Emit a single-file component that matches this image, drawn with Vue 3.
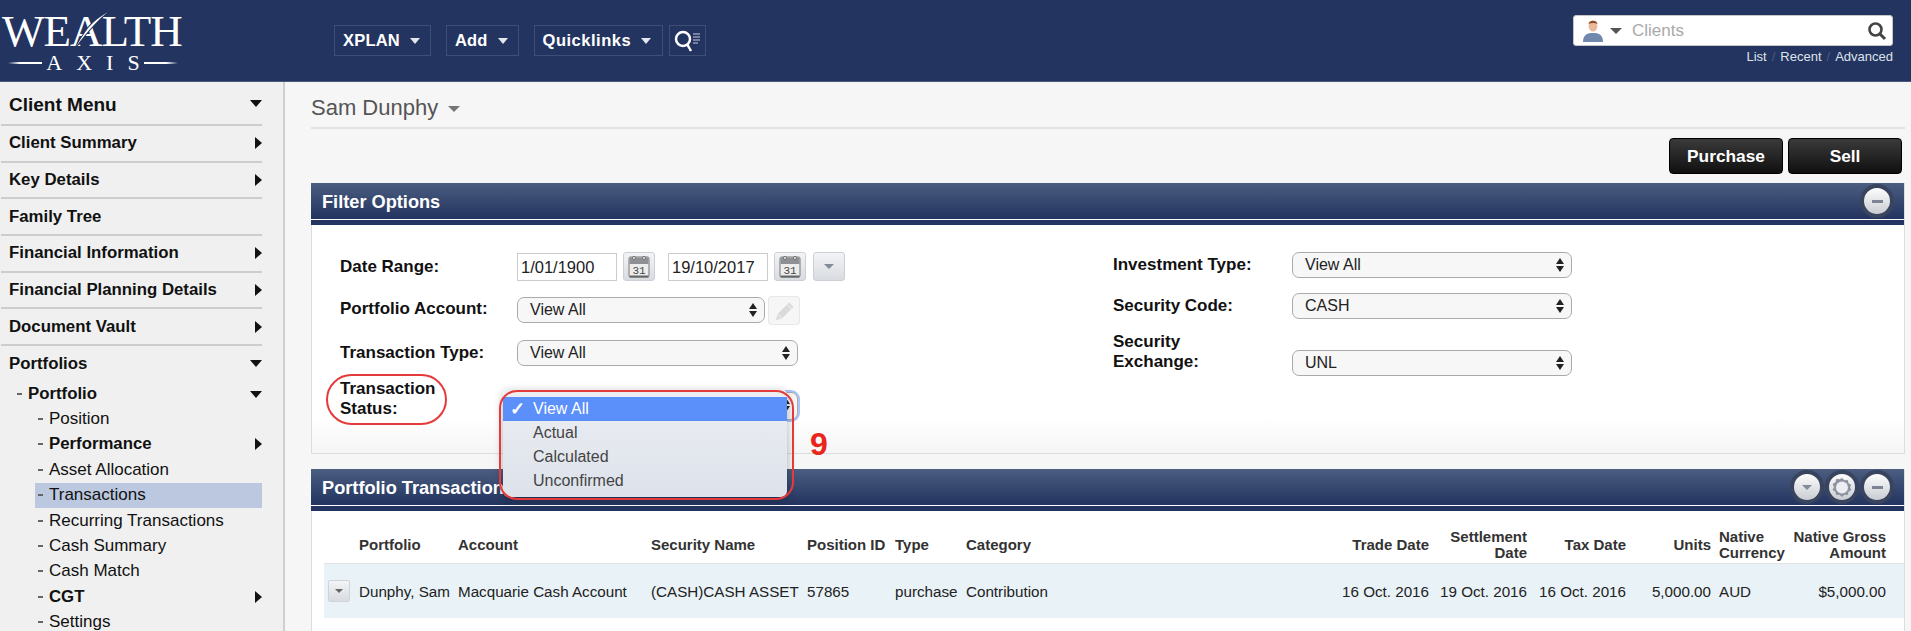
<script setup>
const navButtons = ['XPLAN', 'Add', 'Quicklinks']
const menu = [
  { label: 'Client Summary', icon: 'right' },
  { label: 'Key Details', icon: 'right' },
  { label: 'Family Tree' },
  { label: 'Financial Information', icon: 'right' },
  { label: 'Financial Planning Details', icon: 'right' },
  { label: 'Document Vault', icon: 'right' },
]
const sub = [
  { label: 'Position' },
  { label: 'Performance', bold: true, icon: true },
  { label: 'Asset Allocation' },
  { label: 'Transactions', active: true },
  { label: 'Recurring Transactions' },
  { label: 'Cash Summary' },
  { label: 'Cash Match' },
  { label: 'CGT', bold: true, icon: true },
  { label: 'Settings' },
]
const heads = [
  { t: '' }, { t: 'Portfolio' }, { t: 'Account' }, { t: 'Security Name' }, { t: 'Position ID' }, { t: 'Type' }, { t: 'Category' },
  { t: 'Trade Date', r: 1 }, { t: 'Settlement Date', r: 1 }, { t: 'Tax Date', r: 1 }, { t: 'Units', r: 1 },
  { t: 'Native Currency', p: 1 }, { t: 'Native Gross Amount', r: 1 },
]
const cells = [
  { t: 'Dunphy, Sam' }, { t: 'Macquarie Cash Account' }, { t: '(CASH)CASH ASSET' }, { t: '57865' }, { t: 'purchase' }, { t: 'Contribution' },
  { t: '16 Oct. 2016', r: 1 }, { t: '19 Oct. 2016', r: 1 }, { t: '16 Oct. 2016', r: 1 }, { t: '5,000.00', r: 1 },
  { t: 'AUD', p: 1 }, { t: '$5,000.00', r: 1 },
]
const options = ['Actual', 'Calculated', 'Unconfirmed']
</script>

<template>
  <div class="page">
    <header class="top">
      <div class="logo">
        <div class="logo-word">WEALTH</div>
        <svg class="logo-spike" width="34" height="38" viewBox="0 0 34 38"><path d="M33 1C25 7 13 19 1 36C7 25 11 20 14 16C19 10 26 5 33 1Z" fill="#fff" stroke="#22345f" stroke-width="2" paint-order="stroke"/></svg>
        <div class="logo-sub"><i></i><span>AXIS</span><i class="rev"></i></div>
      </div>
      <nav class="nav">
        <div v-for="b in navButtons" :key="b" class="nav-btn">{{ b }}<b class="nav-caret"></b></div>
        <div class="nav-search">
          <svg width="30" height="24" viewBox="0 0 30 24"><circle cx="10" cy="10" r="7" fill="none" stroke="#fff" stroke-width="2.500"/><path d="M14 15l4 7" stroke="#fff" stroke-width="2.500"/><path d="M20 5h7M20 8h7M20 11h7M20 14h5" stroke="#c8cedb" stroke-width="1.200"/></svg>
        </div>
      </nav>
      <div class="client-search">
        <div class="search-box">
          <svg class="person" width="20" height="23" viewBox="0 0 20 23"><ellipse cx="10" cy="7" rx="4.400" ry="5.600" fill="#eab99a"/><path d="M5.500 5C6 .8 14 .8 14.500 5C12 3.500 8 3.500 5.500 5Z" fill="#8a4a2c"/><path d="M0 23C0 15 5 14 10 14S20 15 20 23Z" fill="#7088ad"/></svg>
          <b class="search-caret"></b>
          <span class="search-text">Clients</span>
          <svg class="glass" width="20" height="20" viewBox="0 0 20 20"><circle cx="8.500" cy="8.500" r="6" fill="none" stroke="#444" stroke-width="2.600"/><path d="M13 13l5 5" stroke="#444" stroke-width="3"/></svg>
        </div>
        <div class="search-links"><span>List</span><em>/</em><span>Recent</span><em>/</em><span>Advanced</span></div>
      </div>
    </header>

    <div class="body">
      <aside class="side">
        <div class="menu-row menu-head">Client Menu<b class="down"></b></div>
        <div v-for="m in menu" :key="m.label" class="menu-row">{{ m.label }}<b v-if="m.icon" class="right"></b></div>
        <div class="menu-row last">Portfolios<b class="down"></b></div>
        <div class="sub-row sub-title"><i class="dash"></i>Portfolio<b class="down"></b></div>
        <div v-for="s in sub" :key="s.label" class="sub-row" :class="{ bold: s.bold, active: s.active }">
          <i class="dash"></i>{{ s.label }}<b v-if="s.icon" class="right"></b>
        </div>
      </aside>

      <main class="main">
        <div class="title"><span>Sam Dunphy</span><b class="title-caret"></b></div>
        <div class="actions">
          <button class="black">Purchase</button>
          <button class="black">Sell</button>
        </div>

        <section class="panel">
          <div class="panel-head">
            <h2>Filter Options</h2>
            <div class="round"><i class="minus"></i></div>
          </div>
          <div class="panel-body filters">
            <div class="fcol fleft">
              <div class="frow h29">
                <label>Date Range:</label>
                <div class="date">1/01/1900</div>
                <div class="iconbtn cal"><svg width="24" height="25" viewBox="0 0 24 25"><rect x="2" y="3" width="20" height="20" rx="1.500" fill="#ececec" stroke="#777"/><rect x="2.500" y="3.500" width="19" height="6.500" fill="#8d9195"/><path d="M2.500 22.500h19" stroke="#666" stroke-width="2"/><circle cx="7" cy="4" r="1.600" fill="#ddd" stroke="#666" stroke-width=".8"/><circle cx="17" cy="4" r="1.600" fill="#ddd" stroke="#666" stroke-width=".8"/><text x="12" y="20" text-anchor="middle" class="cal-num">31</text></svg></div>
                <div class="date d2">19/10/2017</div>
                <div class="iconbtn cal"><svg width="24" height="25" viewBox="0 0 24 25"><rect x="2" y="3" width="20" height="20" rx="1.500" fill="#ececec" stroke="#777"/><rect x="2.500" y="3.500" width="19" height="6.500" fill="#8d9195"/><path d="M2.500 22.500h19" stroke="#666" stroke-width="2"/><circle cx="7" cy="4" r="1.600" fill="#ddd" stroke="#666" stroke-width=".8"/><circle cx="17" cy="4" r="1.600" fill="#ddd" stroke="#666" stroke-width=".8"/><text x="12" y="20" text-anchor="middle" class="cal-num">31</text></svg></div>
                <div class="iconbtn drop"><b class="mini-caret"></b></div>
              </div>
              <div class="frow h29 top-align">
                <label>Portfolio Account:</label>
                <div class="sel w248"><span>View All</span><i class="spin"></i></div>
                <div class="iconbtn pencil"><svg width="24" height="24" viewBox="0 0 24 24"><path d="M4 21l1.500-6L17 3.500l4.500 4.500L10 19.500Z" fill="#dadada"/><path d="M5.500 15l4.500 4.500M15 5.500l4.500 4.500" stroke="#f6f6f6" stroke-width="1"/></svg></div>
              </div>
              <div class="frow h26">
                <label>Transaction Type:</label>
                <div class="sel w281"><span>View All</span><i class="spin"></i></div>
              </div>
              <div class="frow status">
                <label class="two">Transaction Status:<span class="ring-label"></span></label>
                <div class="sel w281 focus">
                  <span>View All</span><i class="spin"></i>
                  <div class="dropdown">
                    <div class="opt on"><span class="check">✓</span>View All</div>
                    <div v-for="o in options" :key="o" class="opt">{{ o }}</div>
                  </div>
                  <div class="ring-drop"></div>
                  <div class="nine">9</div>
                </div>
              </div>
            </div>
            <div class="fcol fright">
              <div class="frow h26">
                <label>Investment Type:</label>
                <div class="sel w280"><span>View All</span><i class="spin"></i></div>
              </div>
              <div class="frow h26">
                <label>Security Code:</label>
                <div class="sel w280"><span>CASH</span><i class="spin"></i></div>
              </div>
              <div class="frow exch">
                <label class="two">Security Exchange:</label>
                <div class="sel w280"><span>UNL</span><i class="spin"></i></div>
              </div>
            </div>
          </div>
        </section>

        <section class="panel second">
          <div class="panel-head">
            <h2>Portfolio Transactions</h2>
            <div class="round"><b class="mini-caret"></b></div>
            <div class="round"><svg width="22" height="22" viewBox="0 0 22 22"><path d="M11 2l2.500 2.300 3.300-.4.7 3.300 2.900 1.700L19 11l1.400 3.100-2.900 1.700-.7 3.300-3.300-.4L11 21l-2.500-2.300-3.300.4-.7-3.300-2.900-1.700L3 11 1.600 7.900l2.900-1.700.7-3.300 3.300.4Z" fill="#8d93a0"/><circle cx="11" cy="11.500" r="6" fill="#eceef1"/></svg></div>
            <div class="round"><i class="minus"></i></div>
          </div>
          <div class="panel-body table">
            <div class="grid thead">
              <div v-for="(h, i) in heads" :key="i" :class="{ r: h.r, p: h.p }">{{ h.t }}</div>
            </div>
            <div class="grid trow">
              <div><div class="expand"><b class="mini-caret"></b></div></div>
              <div v-for="(c, i) in cells" :key="i" :class="{ r: c.r, p: c.p }">{{ c.t }}</div>
            </div>
          </div>
        </section>
      </main>
    </div>
  </div>
</template>

<style>
html, body { margin: 0; background: #f6f6f6; overflow: hidden; }
</style>

<style scoped>
.page { width: 1911px; height: 631px; overflow: hidden; font-family: "Liberation Sans", Arial, sans-serif; color: #111; display: flex; flex-direction: column; }
.top { height: 81px; flex: none; background: #22345f; border-bottom: 1px solid #4a5a7c; display: flex; position: relative; }
.logo { width: 334px; flex: none; position: relative; color: #fff; font-family: "Liberation Serif", serif; }
.logo-word { font-size: 45px; line-height: 41px; margin: 11px 0 0 2px; letter-spacing: -1px; }
.logo-spike { position: absolute; left: 75px; top: 11px; }
.logo-sub { display: flex; align-items: center; margin: 0 0 0 8px; width: 170px; justify-content: space-between; font-size: 22px; line-height: 22px; }
.logo-sub span { letter-spacing: 14px; margin-right: -14px; }
.logo-sub i { width: 34px; height: 2px; background: linear-gradient(90deg, transparent, #fff 35%); display: block; }
.logo-sub i.rev { background: linear-gradient(270deg, transparent, #fff 35%); }
.nav { display: flex; align-items: flex-start; margin-top: 25px; }
.nav-btn { height: 29px; border: 1px solid #3e4f77; padding: 0 10px 0 8px; display: flex; align-items: center; color: #fff; font-weight: 700; font-size: 16.500px; letter-spacing: .2px; margin-right: 15px; }
.nav-btn:nth-child(3) { margin-right: 6px; letter-spacing: .5px; padding-right: 11px; }
.nav-caret { border: 5px solid transparent; border-top: 6px solid #e4e7ee; border-bottom: 0; margin-left: 10px; }
.nav-search { width: 35px; height: 29px; border: 1px solid #3e4f77; display: flex; align-items: center; justify-content: center; }
.client-search { margin-left: auto; margin-right: 18px; margin-top: 15px; width: 320px; }
.search-box { height: 29px; background: #fff; border: 1px solid #c6c6c6; border-radius: 3px; display: flex; align-items: center; padding: 0 5px 0 9px; }
.search-caret { border: 6px solid transparent; border-top: 6px solid #555; border-bottom: 0; margin-left: 7px; }
.search-text { color: #a9a9a9; font-size: 17px; margin-left: 10px; }
.glass { margin-left: auto; }
.search-links { display: flex; justify-content: flex-end; color: #dfe3ea; font-size: 13px; line-height: 16px; margin-top: 3px; }
.search-links em { color: #4d5d80; font-style: normal; margin: 0 5px; }

.body { flex: 1; display: flex; min-height: 0; }
.side { flex: none; background: #f0f0f0; border-right: 2px solid #cfcfcf; padding-left: 1px; width: 282px; }
.menu-row { width: 261px; box-sizing: border-box; height: 36.670px; border-bottom: 2px solid #cdcdcd; display: flex; align-items: center; padding-left: 8px; font-weight: 700; font-size: 16.800px; position: relative; }
.menu-head { height: 44px; font-size: 19px; padding-top: 4px; }
.menu-row.last { border: 0; height: 35px; padding-top: 2px; }
.down { position: absolute; right: 0; top: 50%; margin-top: -3px; border: 6.500px solid transparent; border-top: 7px solid #111; border-bottom: 0; }
.right { position: absolute; right: 0; top: 50%; margin-top: -6px; border: 6px solid transparent; border-left: 7px solid #111; border-right: 0; }
.sub-row { width: 227px; margin-left: 34px; height: 25.400px; display: flex; align-items: center; font-size: 17px; position: relative; padding-left: 3px; box-sizing: border-box; }
.sub-row.bold { font-weight: 700; font-size: 16.800px; }
.sub-row.active { background: #bcc8e0; }
.sub-title { width: 246px; margin-left: 15px; font-weight: 700; padding-left: 1px; font-size: 16.800px; }
.dash { width: 5px; height: 2px; background: #666; margin-right: 6px; flex: none; }

.main { flex: 1; min-width: 0; background: #f6f6f6; padding: 0 6px 0 26px; }
.title { height: 47px; border-bottom: 2px solid #e2e2e2; display: flex; align-items: center; color: #555; font-size: 22px; padding-top: 7px; box-sizing: border-box; }
.title-caret { border: 6px solid transparent; border-top: 6px solid #777; border-bottom: 0; margin-left: 10px; margin-top: 2px; }
.actions { display: flex; justify-content: flex-end; gap: 5px; padding: 9px 3px 9px 0; }
.black { width: 114px; height: 36px; border: 1px solid #000; border-radius: 4px; background: linear-gradient(#3a3a3a, #101010); color: #fff; font: 700 17.300px "Liberation Sans", Arial, sans-serif; padding: 0; }

.panel { border-right: 1px solid #ddd; }
.panel-head { height: 36px; background: linear-gradient(#4b5d80, #22345f); border-bottom: 1px solid #fff; box-shadow: 0 5px 0 #22345f; margin-bottom: 5px; display: flex; align-items: center; gap: 1px; padding: 0 10px 0 11px; }
.panel-head h2 { margin: 2px auto 0 0; color: #fff; font-size: 18.200px; font-weight: 700; }
.round { width: 34px; height: 34px; box-sizing: border-box; border-radius: 50%; border: 4px solid #39445f; background: linear-gradient(#fdfdfd, #c9ccd2); display: flex; align-items: center; justify-content: center; }
.minus { width: 11px; height: 3px; background: #7c8392; display: block; }
.mini-caret { border: 5px solid transparent; border-top: 5px solid #848b98; border-bottom: 0; display: block; }
.panel-body { background: #fff; border-left: 1px solid #ddd; }
.filters { height: 229px; padding: 27px 0 0 28px; box-sizing: border-box; display: flex; border-bottom: 1px solid #ddd; background: linear-gradient(#fff 85%, #f5f5f5); }
.fcol { display: flex; flex-direction: column; }
.fleft { width: 773px; }
.frow { display: flex; align-items: center; }
.frow label { font-weight: 700; font-size: 17px; line-height: 20px; width: 177px; flex: none; }
.fright .frow label { width: 179px; }
.top-align { align-items: flex-start; }
.top-align label { line-height: 26px; }
.top-align .sel { margin-top: 1px; }
.h29 { height: 29px; margin-bottom: 15px; }
.h26 { height: 26px; }
.fleft .h26 { margin-bottom: 11px; }
.fright .h26 { margin-bottom: 15px; }
.date { width: 100px; height: 28px; box-sizing: border-box; border: 1px solid #ccc; background: #fff; font-size: 16.500px; color: #222; line-height: 26px; padding-left: 3px; }
.d2 { margin-left: 13px; }
.iconbtn { width: 32px; height: 29px; box-sizing: border-box; border: 1px solid #ccd0d6; border-radius: 3px; background: linear-gradient(#f3f4f6, #d8dbe0); display: flex; align-items: center; justify-content: center; margin-left: 6px; }
.drop { margin-left: 7px; }
.pencil { background: #f6f6f6; border-color: #e8e8e8; margin-left: 3px; }
.cal-num { font: 11px "Liberation Mono", monospace; fill: #444; }
.sel { position: relative; height: 26px; box-sizing: border-box; border: 1px solid #aaa; border-radius: 7px; background: #f7f7f7; font-size: 16px; color: #222; line-height: 24px; padding-left: 12px; }
.w248 { width: 248px; }
.w281 { width: 281px; }
.w280 { width: 280px; }
.spin { position: absolute; right: 7px; top: 5px; width: 0; height: 0; border: 4.500px solid transparent; border-bottom: 6px solid #222; border-top: 0; }
.spin::after { content: ""; position: absolute; left: -4.500px; top: 8px; border: 4.500px solid transparent; border-top: 6px solid #222; border-bottom: 0; }
.status { height: 43px; align-items: flex-end; }
.two { position: relative; width: 110px !important; margin-right: 67px; padding-bottom: 1px; }
.ring-label { position: absolute; left: -14px; top: -5px; width: 121px; height: 51px; border: 2px solid #e63a3a; border-radius: 27px; box-sizing: border-box; }
.focus { height: 28px; box-shadow: 0 0 0 2px #a9c4f6; }
.dropdown { position: absolute; left: -15px; top: -4px; width: 284px; height: 108px; border-radius: 6px; background: linear-gradient(#eceef2, #dde2eb); box-shadow: 0 3px 10px rgba(0,0,0,.3); padding-top: 8px; box-sizing: border-box; z-index: 5; }
.opt { height: 24px; line-height: 24px; padding-left: 30px; color: #444; font-size: 16px; position: relative; }
.opt.on { background: #5b8ffa; color: #fff; }
.check { position: absolute; left: 7px; font-weight: 700; font-size: 18px; }
.ring-drop { position: absolute; left: -19px; top: -3px; width: 295px; height: 110px; border: 2px solid #e63a3a; border-radius: 18px; box-sizing: border-box; z-index: 6; }
.nine { position: absolute; left: 292px; top: 35px; color: #e8261c; font-size: 32px; line-height: 32px; font-weight: 700; z-index: 6; }
.exch { height: 42px; align-items: flex-end; }
.exch label { margin-bottom: 4px; width: 120px !important; margin-right: 59px; padding: 0; }
.second { margin-top: 15px; }
.table { height: 130px; }
.grid { display: grid; grid-template-columns: 35px 99px 193px 156px 88px 71px 374px 89px 98px 99px 85px 79px 96px 18px; margin-left: 12px; align-items: center; }
.thead { padding-top: 16px; height: 53px; box-sizing: border-box; font-weight: 700; font-size: 15px; line-height: 16px; color: #333; border-bottom: 1px solid #e4e4e4; }
.trow { height: 54px; background: #e9f2f7; font-size: 15.200px; color: #222; }
.r { text-align: right; }
.p { padding-left: 8px; }
.expand { width: 22px; height: 22px; margin-left: 4px; box-sizing: border-box; border: 1px solid #d0d4da; border-radius: 2px; background: linear-gradient(#f3f4f6, #d8dbe0); display: flex; align-items: center; justify-content: center; }
.expand .mini-caret { border-width: 4px; border-bottom: 0; border-top-color: #666; }
</style>
